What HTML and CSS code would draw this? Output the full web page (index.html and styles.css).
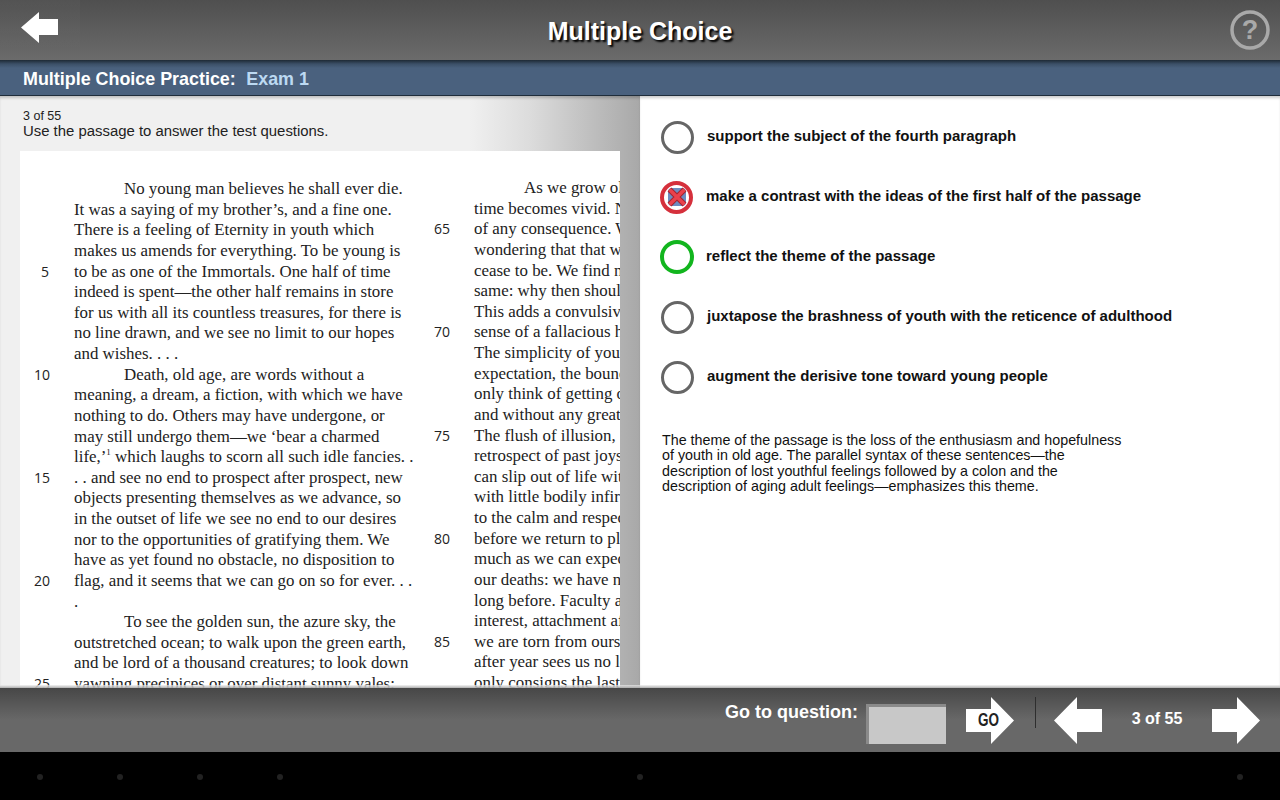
FILE: index.html
```html
<!DOCTYPE html>
<html>
<head>
    <title>Multiple Choice</title>
    <meta charset="UTF-8">
    <link rel="stylesheet" href="styles.css">
</head>
<body>
    <div class="app">
        <header class="top-bar">
            <div class="back-btn">
                <svg width="38" height="31" viewBox="0 0 38 31"><polygon points="0,15.5 18,0 18,7 37,7 37,23 18,23 18,31" fill="#fff"/></svg>
            </div>
            <h1 class="top-title">Multiple Choice</h1>
            <svg class="help-icon" width="42" height="42" viewBox="0 0 42 42">
                <circle cx="21" cy="21" r="18" fill="none" stroke="#a9a9a9" stroke-width="3.5"/>
                <text x="21" y="30" text-anchor="middle" class="help-mark">?</text>
            </svg>
        </header>

        <div class="sub-bar">Multiple Choice Practice:<span class="exam-name">Exam 1</span></div>

        <main class="content">
            <section class="left-pane">
                <div class="count">3 of 55</div>
                <div class="prompt">Use the passage to answer the test questions.</div>
                <div class="passage">
                    <div class="column">
                        <div class="line"><span class="num"></span><span class="txt indent">No young man believes he shall ever die.</span></div>
                        <div class="line"><span class="num"></span><span class="txt">It was a saying of my brother’s, and a fine one.</span></div>
                        <div class="line"><span class="num"></span><span class="txt">There is a feeling of Eternity in youth which</span></div>
                        <div class="line"><span class="num"></span><span class="txt">makes us amends for everything. To be young is</span></div>
                        <div class="line"><span class="num">5</span><span class="txt">to be as one of the Immortals. One half of time</span></div>
                        <div class="line"><span class="num"></span><span class="txt">indeed is spent—the other half remains in store</span></div>
                        <div class="line"><span class="num"></span><span class="txt">for us with all its countless treasures, for there is</span></div>
                        <div class="line"><span class="num"></span><span class="txt">no line drawn, and we see no limit to our hopes</span></div>
                        <div class="line"><span class="num"></span><span class="txt">and wishes. . . .</span></div>
                        <div class="line"><span class="num">10</span><span class="txt indent">Death, old age, are words without a</span></div>
                        <div class="line"><span class="num"></span><span class="txt">meaning, a dream, a fiction, with which we have</span></div>
                        <div class="line"><span class="num"></span><span class="txt">nothing to do. Others may have undergone, or</span></div>
                        <div class="line"><span class="num"></span><span class="txt">may still undergo them—we ‘bear a charmed</span></div>
                        <div class="line"><span class="num"></span><span class="txt">life,’<sup class="note">1</sup> which laughs to scorn all such idle fancies. .</span></div>
                        <div class="line"><span class="num">15</span><span class="txt">. . and see no end to prospect after prospect, new</span></div>
                        <div class="line"><span class="num"></span><span class="txt">objects presenting themselves as we advance, so</span></div>
                        <div class="line"><span class="num"></span><span class="txt">in the outset of life we see no end to our desires</span></div>
                        <div class="line"><span class="num"></span><span class="txt">nor to the opportunities of gratifying them. We</span></div>
                        <div class="line"><span class="num"></span><span class="txt">have as yet found no obstacle, no disposition to</span></div>
                        <div class="line"><span class="num">20</span><span class="txt">flag, and it seems that we can go on so for ever. . .</span></div>
                        <div class="line"><span class="num"></span><span class="txt">.</span></div>
                        <div class="line"><span class="num"></span><span class="txt indent">To see the golden sun, the azure sky, the</span></div>
                        <div class="line"><span class="num"></span><span class="txt">outstretched ocean; to walk upon the green earth,</span></div>
                        <div class="line"><span class="num"></span><span class="txt">and be lord of a thousand creatures; to look down</span></div>
                        <div class="line"><span class="num">25</span><span class="txt">yawning precipices or over distant sunny vales;</span></div>
                    </div>
                    <div class="column column-right">
                        <div class="line"><span class="num"></span><span class="txt indent">As we grow old</span></div>
                        <div class="line"><span class="num"></span><span class="txt">time becomes vivid. Nothing</span></div>
                        <div class="line"><span class="num">65</span><span class="txt">of any consequence. We</span></div>
                        <div class="line"><span class="num"></span><span class="txt">wondering that that which</span></div>
                        <div class="line"><span class="num"></span><span class="txt">cease to be. We find many</span></div>
                        <div class="line"><span class="num"></span><span class="txt">same: why then should</span></div>
                        <div class="line"><span class="num"></span><span class="txt">This adds a convulsive</span></div>
                        <div class="line"><span class="num">70</span><span class="txt">sense of a fallacious hollowness</span></div>
                        <div class="line"><span class="num"></span><span class="txt">The simplicity of youth</span></div>
                        <div class="line"><span class="num"></span><span class="txt">expectation, the boundless</span></div>
                        <div class="line"><span class="num"></span><span class="txt">only think of getting on</span></div>
                        <div class="line"><span class="num"></span><span class="txt">and without any great</span></div>
                        <div class="line"><span class="num">75</span><span class="txt">The flush of illusion, even</span></div>
                        <div class="line"><span class="num"></span><span class="txt">retrospect of past joys</span></div>
                        <div class="line"><span class="num"></span><span class="txt">can slip out of life with</span></div>
                        <div class="line"><span class="num"></span><span class="txt">with little bodily infirmity</span></div>
                        <div class="line"><span class="num"></span><span class="txt">to the calm and respect</span></div>
                        <div class="line"><span class="num">80</span><span class="txt">before we return to play</span></div>
                        <div class="line"><span class="num"></span><span class="txt">much as we can expect</span></div>
                        <div class="line"><span class="num"></span><span class="txt">our deaths: we have not</span></div>
                        <div class="line"><span class="num"></span><span class="txt">long before. Faculty after</span></div>
                        <div class="line"><span class="num"></span><span class="txt">interest, attachment after</span></div>
                        <div class="line"><span class="num">85</span><span class="txt">we are torn from ourselves</span></div>
                        <div class="line"><span class="num"></span><span class="txt">after year sees us no longer</span></div>
                        <div class="line"><span class="num"></span><span class="txt">only consigns the last</span></div>
                    </div>
                </div>
            </section>

            <section class="right-pane">
                <div class="option">
                    <span class="radio"></span>
                    <span class="option-text">support the subject of the fourth paragraph</span>
                </div>
                <div class="option">
                    <span class="radio radio-wrong">
                        <svg width="24" height="24" viewBox="0 0 24 24">
                            <rect x="3" y="3" width="18" height="18" rx="4" fill="#6d8cc0"/>
                            <path d="M4.5 4.5 L19.5 19.5 M19.5 4.5 L4.5 19.5" stroke="#a5222e" stroke-width="5.5"/>
                            <path d="M4.5 4.5 L19.5 19.5 M19.5 4.5 L4.5 19.5" stroke="#ea414c" stroke-width="3.5"/>
                        </svg>
                    </span>
                    <span class="option-text">make a contrast with the ideas of the first half of the passage</span>
                </div>
                <div class="option">
                    <span class="radio radio-right"></span>
                    <span class="option-text">reflect the theme of the passage</span>
                </div>
                <div class="option">
                    <span class="radio"></span>
                    <span class="option-text">juxtapose the brashness of youth with the reticence of adulthood</span>
                </div>
                <div class="option">
                    <span class="radio"></span>
                    <span class="option-text">augment the derisive tone toward young people</span>
                </div>
                <p class="explain">The theme of the passage is the loss of the enthusiasm and hopefulness<br>of youth in old age. The parallel syntax of these sentences—the<br>description of lost youthful feelings followed by a colon and the<br>description of aging adult feelings—emphasizes this theme.</p>
            </section>
        </main>

        <footer class="bottom-bar">
            <span class="goto-label">Go to question:</span>
            <div class="goto-input"></div>
            <div class="go-btn">
                <svg width="48" height="47" viewBox="0 0 48 47"><polygon points="0,12 25,12 25,0 48,23.5 25,47 25,35 0,35" fill="#fff"/></svg>
                <span class="go-text">GO</span>
            </div>
            <div class="divider"></div>
            <svg class="nav-arrow" width="48" height="47" viewBox="0 0 48 47"><polygon points="0,23.5 23,0 23,12 48,12 48,35 23,35 23,47" fill="#fff"/></svg>
            <span class="page-count">3 of 55</span>
            <svg class="nav-arrow" width="48" height="47" viewBox="0 0 48 47"><polygon points="0,12 25,12 25,0 48,23.5 25,47 25,35 0,35" fill="#fff"/></svg>
        </footer>

        <div class="system-bar">
            <span class="dot dot-a"></span>
            <span class="dot dot-b"></span>
            <span class="dot dot-b"></span>
            <span class="dot dot-b"></span>
            <span class="dot dot-c"></span>
            <span class="dot dot-d"></span>
        </div>
    </div>
</body>
</html>
```

FILE: styles.css
```css
html, body {
    margin: 0;
    padding: 0;
    background: #000;
}

.app {
    width: 1280px;
    height: 800px;
    display: flex;
    flex-direction: column;
    overflow: hidden;
    font-family: "Liberation Sans", Arial, sans-serif;
}

/* top bar */
.top-bar {
    height: 60px;
    flex: none;
    display: grid;
    grid-template-columns: 1fr auto 1fr;
    align-items: center;
    background: linear-gradient(#4f4f4f, #6b6b6b);
}

.back-btn {
    width: 80px;
    height: 55px;
    align-self: start;
    padding: 12px 0 0 21px;
    box-sizing: border-box;
    background: linear-gradient(rgba(255, 255, 255, 0.025), rgba(255, 255, 255, 0));
}

.top-title {
    margin: 2px 0 0;
    color: #fff;
    font-size: 25px;
    font-weight: bold;
    text-shadow: 2px 2px 2px #000;
}

.help-icon {
    justify-self: end;
    margin-right: 9px;
}

.help-mark {
    font-family: "Liberation Sans", Arial, sans-serif;
    font-size: 27px;
    font-weight: bold;
    fill: #a9a9a9;
}

.sub-bar {
    height: 36px;
    flex: none;
    display: flex;
    align-items: center;
    padding: 3px 0 0 23px;
    box-sizing: border-box;
    background: linear-gradient(#1e2a35, #3c5068 4px, #4a617e 8px);
    border-bottom: 1px solid #1f2d3b;
    color: #fff;
    font-size: 17.9px;
    font-weight: bold;
}

.exam-name {
    margin-left: 10.5px;
    color: #bcd9f2;
}

/* main panes */
.content {
    flex: 1;
    min-height: 0;
    display: flex;
}

.left-pane {
    width: 640px;
    display: flex;
    flex-direction: column;
    padding: 14px 20px 0;
    box-sizing: border-box;
    background: linear-gradient(90deg, #f0f0f0 470px, #dcdcdc 530px, #c4c4c4 580px, #a8a8a8 640px);
    box-shadow: inset 0 3px 3px -1px rgba(0, 0, 0, 0.2);
}

.count {
    padding-left: 3px;
    font-size: 12.5px;
    line-height: 13px;
    color: #222;
}

.prompt {
    padding-left: 3px;
    font-size: 14.9px;
    line-height: 17px;
    color: #222;
}

.passage {
    flex: 1;
    min-height: 0;
    margin-top: 11px;
    display: flex;
    overflow: hidden;
    background: #fff;
    font-family: "Liberation Serif", "Times New Roman", serif;
    font-size: 16.9px;
    color: #222;
}

.column {
    width: 400px;
    flex: none;
    padding: 28px 0 0 14px;
    box-sizing: border-box;
}

.column-right {
    padding-top: 27px;
}

.line {
    height: 20.64px;
    line-height: 20.64px;
    display: flex;
    white-space: nowrap;
}

.num {
    width: 15px;
    margin-right: 25px;
    flex: none;
    text-align: right;
    font-family: "Open Sans", sans-serif;
    font-size: 14px;
}

.indent {
    padding-left: 50px;
}

.note {
    font-size: 9px;
    line-height: 0;
}

.right-pane {
    flex: 1;
    padding: 10px 21px 0;
    background: #fff;
    box-shadow: inset 0 3px 3px -1px rgba(0, 0, 0, 0.2);
}

.option {
    height: 60px;
    display: flex;
    align-items: center;
    gap: 13px;
}

.radio {
    width: 33px;
    height: 33px;
    flex: none;
    margin-top: 2px;
    display: flex;
    align-items: center;
    justify-content: center;
    box-sizing: border-box;
    border: 3px solid #666;
    border-radius: 50%;
}

.radio-wrong {
    margin-left: -1px;
    border: 4px solid #d5303c;
}

.radio-right {
    width: 34px;
    height: 34px;
    margin-left: -1px;
    margin-right: -1px;
    border: 4px solid #12b51e;
}

.option-text {
    margin-bottom: 2px;
    font-size: 15px;
    font-weight: bold;
    color: #111;
}

.explain {
    margin: 27px 0 0 1px;
    font-size: 14.3px;
    line-height: 15.3px;
    color: #111;
}

/* bottom bar */
.bottom-bar {
    height: 64px;
    flex: none;
    display: flex;
    align-items: flex-start;
    padding-right: 20px;
    box-sizing: border-box;
    justify-content: flex-end;
    background: linear-gradient(#474747, #686868 50%);
    position: relative;
    color: #fff;
    font-weight: bold;
}

/* shadow that lies over the panes */
.bottom-bar::before {
    content: "";
    position: absolute;
    left: 0;
    right: 0;
    top: -3px;
    height: 3px;
    background: linear-gradient(rgba(240, 240, 240, 0.7), rgba(170, 170, 170, 0.95));
}

.goto-label {
    margin: 14px 8px 0 0;
    font-size: 18px;
}

.goto-input {
    width: 80px;
    height: 40px;
    margin-top: 16px;
    background: #c8c8c8;
    box-shadow: inset 3px 3px 0 #8a8a8a;
}

.go-btn {
    position: relative;
    width: 48px;
    height: 47px;
    margin: 9px 0 0 20px;
}

.go-text {
    position: absolute;
    left: 12px;
    top: 13px;
    line-height: 20px;
    color: #222;
    font-size: 18px;
    transform: scaleX(0.75);
    transform-origin: left;
}

.divider {
    width: 1px;
    height: 31px;
    margin: 9px 18px 0 21px;
    background: #2e2e2e;
}

.nav-arrow {
    margin-top: 9px;
}

.page-count {
    width: 110px;
    margin-top: 22px;
    text-align: center;
    font-size: 16px;
}

/* system nav */
.system-bar {
    height: 48px;
    flex: none;
    position: relative;
    background: #000;
}

.dot {
    position: absolute;
    top: 22px;
    width: 6px;
    height: 6px;
    border-radius: 50%;
    background: #222;
}

.dot-a { left: 37px; }
.dot-b:nth-child(2) { left: 117px; }
.dot-b:nth-child(3) { left: 197px; }
.dot-b:nth-child(4) { left: 277px; }
.dot-c { left: 637px; }
.dot-d { left: 1237px; }
```
